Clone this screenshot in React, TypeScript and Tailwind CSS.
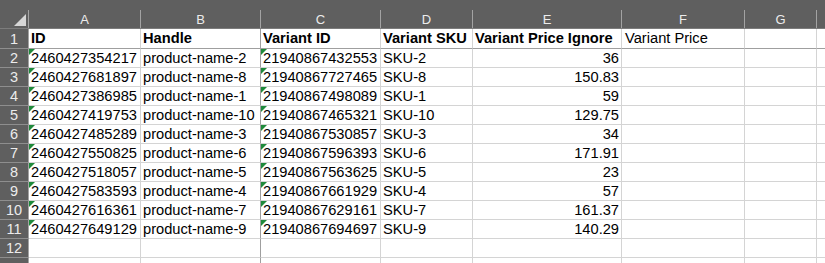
const cols = ["A", "B", "C", "D", "E", "F", "G", ""];

const rows = [
  ["2460427354217", "product-name-2", "21940867432553", "SKU-2", "36"],
  ["2460427681897", "product-name-8", "21940867727465", "SKU-8", "150.83"],
  ["2460427386985", "product-name-1", "21940867498089", "SKU-1", "59"],
  ["2460427419753", "product-name-10", "21940867465321", "SKU-10", "129.75"],
  ["2460427485289", "product-name-3", "21940867530857", "SKU-3", "34"],
  ["2460427550825", "product-name-6", "21940867596393", "SKU-6", "171.91"],
  ["2460427518057", "product-name-5", "21940867563625", "SKU-5", "23"],
  ["2460427583593", "product-name-4", "21940867661929", "SKU-4", "57"],
  ["2460427616361", "product-name-7", "21940867629161", "SKU-7", "161.37"],
  ["2460427649129", "product-name-9", "21940867694697", "SKU-9", "140.29"],
];

// green "number stored as text" marker
function Flag() {
  return (
    <span className="absolute top-0 left-0 w-0 h-0 border-t-[6px] border-t-[#1f8a3b] border-r-[6px] border-r-transparent" />
  );
}

function ColHeader({ label }: { label: string }) {
  return (
    <div className="h-[29px] flex bg-[#5f5f5f] border-b border-[#7c7c7c]">
      <div className="flex-1 flex items-end justify-center text-[13px] leading-[16px] text-[#ececec]">
        {label}
      </div>
      <div className="w-px mt-[10px] bg-[#a3a3a3]" />
    </div>
  );
}

function RowHeader({ n, tall }: { n?: number; tall?: boolean }) {
  return (
    <div
      className={`${
        tall ? "h-[20px]" : "h-[19px]"
      } flex items-end justify-center bg-[#5f5f5f] border-r border-b border-r-[#a3a3a3] border-b-[#8e8e8e] text-[14.5px] leading-[18px] text-[#ececec] overflow-hidden`}
    >
      {n}
    </div>
  );
}

export default function App() {
  const cell =
    "relative h-[19px] bg-white border-b border-r border-[#d4d4d4] px-[2px] text-[14.67px] leading-[18px] text-black whitespace-nowrap overflow-hidden";
  const freeze = "border-r-[#9f9f9f]";
  const head = "h-[20px] leading-[19px] border-b-[#9f9f9f]";

  return (
    <div className="w-[825px] h-[263px] overflow-hidden bg-white font-['Liberation_Sans',Arial,sans-serif]">
      <div className="grid w-max grid-cols-[29px_112px_120px_120px_92px_149px_123px_72px_72px]">
        {/* column headers */}
        <div className="h-[29px] flex bg-[#5f5f5f] border-b border-[#7c7c7c]">
          <div className="flex-1 flex items-end justify-end pr-[2px] pb-[2px]">
            <span className="w-0 h-0 border-l-[12px] border-l-transparent border-b-[12px] border-b-[#d6d6d6]" />
          </div>
          <div className="w-px mt-[10px] bg-[#a3a3a3]" />
        </div>
        {cols.map((c, i) => (
          <ColHeader key={i} label={c} />
        ))}

        {/* row 1: headings */}
        <RowHeader n={1} tall />
        <div className={`${cell} ${head} font-bold bg-[#e2efda]`}>ID</div>
        <div className={`${cell} ${head} font-bold bg-[#e2efda] ${freeze}`}>Handle</div>
        <div className={`${cell} ${head} font-bold bg-[#a9d08e]`}>Variant ID</div>
        <div className={`${cell} ${head} font-bold bg-[#a9d08e]`}>Variant SKU</div>
        <div className={`${cell} ${head} font-bold bg-[#a9d08e]`}>Variant Price Ignore</div>
        <div className={`${cell} ${head} pl-[3px]`}>Variant Price</div>
        <div className={`${cell} ${head}`} />
        <div className={`${cell} ${head}`} />

        {/* data */}
        {rows.map((r, i) => (
          <div key={i} className="contents">
            <RowHeader n={i + 2} />
            <div className={cell}>
              <Flag />
              {r[0]}
            </div>
            <div className={`${cell} ${freeze}`}>{r[1]}</div>
            <div className={cell}>
              <Flag />
              {r[2]}
            </div>
            <div className={cell}>{r[3]}</div>
            <div className={`${cell} text-right`}>{r[4]}</div>
            <div className={cell} />
            <div className={cell} />
            <div className={cell} />
          </div>
        ))}

        {/* empty rows */}
        {[12, undefined].map((n, i) => (
          <div key={i} className="contents">
            <RowHeader n={n} />
            <div className={cell} />
            <div className={`${cell} ${freeze}`} />
            <div className={cell} />
            <div className={cell} />
            <div className={cell} />
            <div className={cell} />
            <div className={cell} />
            <div className={cell} />
          </div>
        ))}
      </div>
    </div>
  );
}
